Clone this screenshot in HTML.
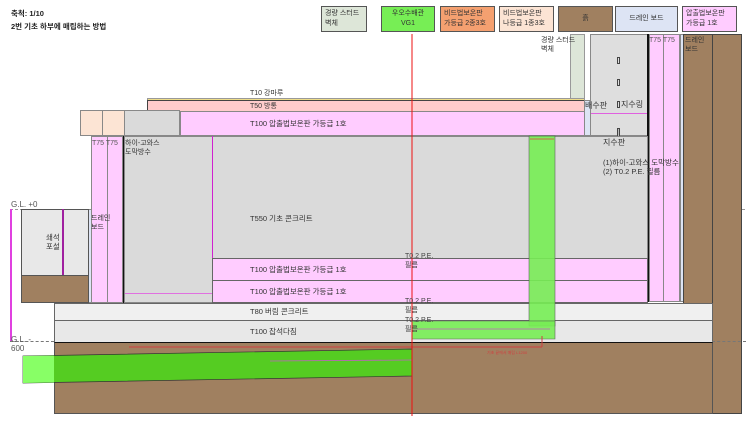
<!DOCTYPE html>
<html><head><meta charset="utf-8"><style>
body{margin:0;width:750px;height:422px;background:#fff;position:relative;overflow:hidden;font-family:"Liberation Sans","Noto Sans CJK KR",sans-serif;font-size:7px;color:#333}
div{position:absolute;box-sizing:border-box}
.t{white-space:nowrap;line-height:9px;z-index:3}
.lg{border:1px solid #555;padding:2px 3px;font-size:7px;line-height:10px;white-space:nowrap;overflow:hidden}
</style></head><body>
<div class="t" style="left:11px;top:9px;font-size:7.5px;font-weight:bold;color:#222">축척: 1/10</div>
<div class="t" style="left:11px;top:22px;font-size:7.5px;font-weight:bold;color:#222">2번 기초 하부에 매립하는 방법</div>

<div class="lg" style="left:321px;top:6px;width:46px;height:26px;background:#dde6d8">경량 스터드<br>벽체</div>
<div class="lg" style="left:381px;top:6px;width:54px;height:26px;background:#77ee55;text-align:center">우오수배관<br>VG1</div>
<div class="lg" style="left:440px;top:6px;width:55px;height:26px;background:#f4a070">비드법보온판<br>가등급 2종3호</div>
<div class="lg" style="left:499px;top:6px;width:55px;height:26px;background:#fce4d4">비드법보온판<br>나등급 1종3호</div>
<div class="lg" style="left:558px;top:6px;width:55px;height:26px;background:#a08060;text-align:center;line-height:20px">흙</div>
<div class="lg" style="left:615px;top:6px;width:63px;height:26px;background:#dde4f4;text-align:center;line-height:20px">드레인 보드</div>
<div class="lg" style="left:682px;top:6px;width:55px;height:26px;background:#ffccff">압출법보온판<br>가등급 1호</div>

<div style="left:10px;top:209px;width:735px;border-top:1px dashed #999"></div>
<div class="t" style="left:11px;top:200px;font-size:8px;color:#555">G.L. +0</div>

<div style="left:570px;top:34px;width:15px;height:66px;background:#dde6d8;border:1px solid #999"></div>
<div class="t" style="left:541px;top:36px">경량 스터드<br>벽체</div>
<div style="left:590px;top:34px;width:58px;height:102px;background:#dedede;border:1px solid #888"></div>
<div style="left:647px;top:34px;width:2px;height:268px;background:#111"></div>
<div style="left:649px;top:34px;width:15px;height:268px;background:#ffccff;border:1px solid #888"></div>
<div style="left:663px;top:34px;width:17px;height:268px;background:#ffccff;border:1px solid #888"></div>
<div style="left:680px;top:34px;width:4px;height:268px;background:#dde4f4;border:1px solid #888"></div>
<div style="left:683px;top:34px;width:30px;height:270px;background:#a08060;border:1px solid #444"></div>
<div style="left:712px;top:34px;width:30px;height:380px;background:#a08060;border:1px solid #444"></div>
<div class="t" style="left:649px;top:36px;color:#555">T75 T75</div>
<div class="t" style="left:685px;top:36px">드레인<br>보드</div>
<div style="left:617px;top:57px;width:3px;height:7px;border:1px solid #444"></div>
<div style="left:617px;top:79px;width:3px;height:7px;border:1px solid #444"></div>
<div style="left:617px;top:101px;width:3px;height:7px;border:1px solid #444"></div>
<div style="left:617px;top:128px;width:3px;height:11px;border:1px solid #444;background:#bbb"></div>
<div style="left:591px;top:113px;width:56px;border-top:1px solid #e060e0"></div>

<div style="left:147px;top:98px;width:438px;height:3px;background:#eedd88;border:1px solid #999"></div>
<div class="t" style="left:250px;top:89px">T10 강마루</div>
<div style="left:147px;top:100px;width:438px;height:12px;background:#ffcccc;border:1px solid #444"></div>
<div class="t" style="left:250px;top:102px">T50 방통</div>
<div style="left:180px;top:111px;width:405px;height:25px;background:#ffccff;border:1px solid #888"></div>
<div class="t" style="left:250px;top:119px;font-size:7.5px">T100 압출법보온판 가등급 1호</div>
<div style="left:584px;top:100px;width:7px;height:36px;background:#dde4f4;border:1px solid #888"></div>
<div style="left:80px;top:110px;width:23px;height:26px;background:#fce4d4;border:1px solid #888"></div>
<div style="left:102px;top:110px;width:23px;height:26px;background:#fce4d4;border:1px solid #888"></div>
<div style="left:124px;top:110px;width:56px;height:26px;background:#dadada;border:1px solid #888"></div>
<div class="t" style="left:585px;top:101px;font-size:8px">배수판</div>
<div class="t" style="left:621px;top:100px;font-size:8px">지수링</div>

<div style="left:124px;top:136px;width:524px;height:167px;background:#dadada;border:1px solid #888"></div>
<div style="left:122px;top:136px;width:2px;height:167px;background:#111"></div>
<div style="left:212px;top:136px;width:1px;height:167px;background:#d020d0"></div>
<div style="left:125px;top:293px;width:87px;border-top:1px solid #e070e0"></div>
<div class="t" style="left:125px;top:139px">하이-고와스<br>도막방수</div>
<div class="t" style="left:250px;top:214px;font-size:7.5px">T550 기초 콘크리트</div>
<div class="t" style="left:603px;top:138px;font-size:8px">지수판</div>
<div class="t" style="left:603px;top:158px;font-size:7.5px">(1)하이-고와스 도막방수<br>(2) T0.2 P.E. 필름</div>
<div style="left:91px;top:136px;width:17px;height:167px;background:#ffccff;border:1px solid #888"></div>
<div style="left:107px;top:136px;width:16px;height:167px;background:#ffccff;border:1px solid #888"></div>
<div style="left:88px;top:209px;width:4px;height:94px;background:#dde4f4;border:1px solid #888"></div>
<div class="t" style="left:92px;top:139px;color:#555">T75 T75</div>
<div class="t" style="left:91px;top:214px">드레인<br>보드</div>
<div style="left:212px;top:258px;width:436px;height:23px;background:#ffccff;border:1px solid #666"></div>
<div style="left:212px;top:280px;width:436px;height:23px;background:#ffccff;border:1px solid #666"></div>
<div class="t" style="left:250px;top:265px;font-size:7.5px">T100 압출법보온판 가등급 1호</div>
<div class="t" style="left:250px;top:287px;font-size:7.5px">T100 압출법보온판 가등급 1호</div>

<div style="left:21px;top:209px;width:68px;height:94px;background:#e8e8e8;border:1px solid #555"></div>
<div style="left:21px;top:275px;width:68px;height:28px;background:#a08060;border:1px solid #555"></div>
<div style="left:62px;top:209px;width:2px;height:66px;background:#a020a0"></div>
<div class="t" style="left:46px;top:233px;font-size:7.5px">쇄석<br>포설</div>
<div style="left:10px;top:209px;width:2px;height:132px;background:#e040e0"></div>

<div style="left:54px;top:303px;width:659px;height:18px;background:#f0f0f0;border:1px solid #666"></div>
<div style="left:54px;top:320px;width:659px;height:23px;background:#e8e8e8;border:1px solid #666"></div>
<div class="t" style="left:250px;top:307px;font-size:7.5px">T80 버림 콘크리트</div>
<div class="t" style="left:250px;top:327px;font-size:7.5px">T100 잡석다짐</div>
<div style="left:54px;top:342px;width:659px;height:72px;background:#a08060;border:1px solid #555;border-top:1px solid #111"></div>
<div style="left:10px;top:341px;width:44px;border-top:1px dashed #777"></div>
<div class="t" style="left:11px;top:335px;font-size:8px;color:#555">G.L. -<br>600</div>
<div style="left:712px;top:341px;width:34px;border-top:1px dashed #777"></div>

<svg style="position:absolute;left:0;top:0" width="750" height="422">
<polygon points="23,356 412,349 412,376 23,383" fill="#55cc22" stroke="#333" stroke-width="0.7"/>
<polygon points="23,356 54,355.5 54,382.5 23,383" fill="#88ff66"/>
<rect x="529" y="136" width="26" height="190" fill="#77ee55" opacity="0.9" stroke="#555" stroke-width="0.6"/>
<polygon points="412,321 555,321 555,339 412,339" fill="#77ee55" opacity="0.9" stroke="#555" stroke-width="0.6"/>
<line x1="129" y1="347" x2="542" y2="347" stroke="#d04040" stroke-width="1"/>
<line x1="542" y1="336" x2="542" y2="347" stroke="#d04040" stroke-width="1"/>
<line x1="270" y1="361" x2="412" y2="360" stroke="#c060c0" stroke-width="0.8"/>
<line x1="412" y1="329" x2="550" y2="329" stroke="#c060c0" stroke-width="0.8"/>
<line x1="530" y1="139" x2="554" y2="139" stroke="#e04040" stroke-width="0.8"/>
<line x1="412" y1="34" x2="412" y2="416" stroke="#ee1111" stroke-width="1"/>
</svg>
<div class="t" style="left:405px;top:252px;color:#444">T0.2 P.E.<br>필름</div>
<div class="t" style="left:405px;top:297px;color:#444">T0.2 P.E.<br>필름</div>
<div class="t" style="left:405px;top:316px;color:#444">T0.2 P.E.<br>필름</div>
<div class="t" style="left:487px;top:348px;font-size:4px;color:#d04040">기초 끝에서 매립 L1200</div>
</body></html>
